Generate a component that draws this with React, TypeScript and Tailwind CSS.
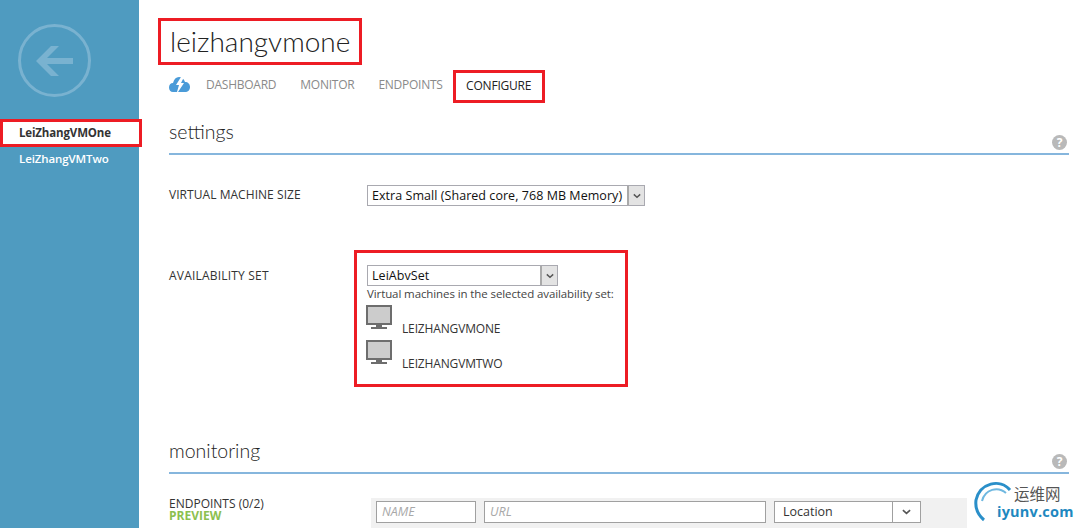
const font = "font-['Open_Sans','Noto_Sans',sans-serif]";

function Chevron({ className }: { className?: string }) {
  return (
    <svg viewBox="0 0 10 6" className={className} fill="none" stroke="currentColor" strokeWidth="1.8">
      <path d="M1 1l4 3.5L9 1" />
    </svg>
  );
}

function Monitor() {
  return (
    <svg width="27" height="25" viewBox="0 0 27 25" className="shrink-0">
      <rect x="1" y="1" width="24" height="18" fill="#cccccc" stroke="#6d6d6d" strokeWidth="2" />
      <rect x="10" y="20" width="6" height="2" fill="#6d6d6d" />
      <rect x="5" y="22" width="16" height="2" fill="#6d6d6d" />
    </svg>
  );
}

function Help() {
  return (
    <div className="w-[15px] h-[15px] -mb-[3px] rounded-full bg-[#b9b9b9] text-white text-[12px] leading-[15px] font-bold text-center">?</div>
  );
}

function SectionHead({ title }: { title: string }) {
  return (
    <div className="flex items-end justify-between h-[42px] border-b-2 border-[#86b6dd] pb-[6px] pr-[2px]">
      <span className="font-['Lato',sans-serif] text-[19.5px] leading-[28px] font-light text-[#222] relative -top-[1px]">{title}</span>
      <Help />
    </div>
  );
}

function NativeSelect({ label, width }: { label: string; width: string }) {
  return (
    <div className={`flex h-[21px] border border-[#a9a9b0] bg-white ${width}`}>
      <span className="flex-1 pl-[4px] text-[12.5px] leading-[19px] text-[#111] whitespace-nowrap overflow-hidden tracking-[0.05px]">{label}</span>
      <span className="w-[17px] bg-[#e3e3e3] border-l-2 border-[#a9a9a9] flex items-center justify-center text-[#555]">
        <Chevron className="w-[8px] h-[6px]" />
      </span>
    </div>
  );
}

export default function App() {
  const tabs = ["DASHBOARD", "MONITOR", "ENDPOINTS"];
  return (
    <div className={`flex h-[528px] w-[1077px] overflow-hidden bg-white relative ${font}`}>
      <aside className="w-[139px] shrink-0 bg-[#4f9bc0] pt-[24px]">
        <div className="ml-[18px] w-[73px] h-[73px] rounded-full border-[3px] border-[#79b2d0] flex items-center justify-center">
          <svg width="38" height="30" viewBox="0 0 38 30" fill="#79b2d0" className="-ml-[2px]">
            <path d="M16 0h8L12 12h26v6H12l12 12h-8L1 15z" />
          </svg>
        </div>
        <div className="mt-[22px] w-[142px] h-[28px] border-[3px] border-[#ed1c24] bg-white pl-[16px] text-[11.5px] leading-[21px] font-bold text-[#333] relative z-10 tracking-[-0.15px]">
          LeiZhangVMOne
        </div>
        <div className="pl-[19px] mt-[2px] text-[11.5px] leading-[20px] font-semibold text-white tracking-[-0.1px]">LeiZhangVMTwo</div>
      </aside>

      <main className="flex-1 pl-[30px] pr-[8px]">
        <div className="pt-[18px] -ml-[11px]">
          <div className="w-[204px] h-[47px] border-[3px] border-[#ed1c24] pl-[9px] font-['Lato',sans-serif] text-[28px] leading-[40px] font-light text-[#222]">
            leizhangvmone
          </div>
        </div>

        <nav className="flex items-center h-[34px] mt-[4px]">
          <svg width="21" height="15" viewBox="0 0 21 15" className="mr-[16px] -mt-[3px]">
            <path fill="#4a9bd8" d="M10 0c3 0 5 2 6 5 3 0 5 2 5 5s-2 5-5 5H4c-2.500 0-4-2-4-4.500S1.500 6 4 6c1-4 3-6 6-6z" />
            <path fill="#fff" d="M12 0L7 8h3l-2 7h1l6-9h-3l3-6z" />
          </svg>
          <div className="flex items-center gap-[24px] text-[12px] text-[#8a8a8a] tracking-[-0.25px] -mt-[2px]">
            {tabs.map((t) => (
              <span key={t}>{t}</span>
            ))}
          </div>
          <span className="ml-[10px] w-[92px] h-[33px] border-[3px] border-[#ed1c24] text-[12px] leading-[26px] text-center text-[#222] tracking-[-0.2px]">
            CONFIGURE
          </span>
        </nav>

        <div className="mt-[10px]">
          <SectionHead title="settings" />
        </div>

        <div className="flex mt-[30px] h-[21px]">
          <span className="w-[198px] text-[12px] leading-[19px] text-[#333] tracking-[0.05px]">VIRTUAL MACHINE SIZE</span>
          <NativeSelect label="Extra Small (Shared core, 768 MB Memory)" width="w-[278px]" />
        </div>

        <div className="flex mt-[44px]">
          <span className="w-[185px] pt-[15px] text-[12px] leading-[21px] text-[#333] tracking-[0.2px]">AVAILABILITY SET</span>
          <div className="w-[274px] h-[137px] border-[3px] border-[#ed1c24] pl-[10px] pt-[12px]">
            <NativeSelect label="LeiAbvSet" width="w-[191px]" />
            <p className="text-[11.5px] leading-[16px] text-[#444] whitespace-nowrap tracking-[-0.1px]">
              Virtual machines in the selected availability set:
            </p>
            <div className="flex mt-[3px] -ml-[1px] h-[35px]">
              <Monitor />
              <span className="ml-[9px] pt-[14px] text-[12px] leading-[20px] text-[#333] tracking-[-0.15px]">LEIZHANGVMONE</span>
            </div>
            <div className="flex -ml-[1px] h-[35px]">
              <Monitor />
              <span className="ml-[9px] pt-[14px] text-[12px] leading-[20px] text-[#333] tracking-[-0.15px]">LEIZHANGVMTWO</span>
            </div>
          </div>
        </div>

        <div className="mt-[45px]">
          <SectionHead title="monitoring" />
        </div>

        <div className="flex mt-[24px]">
          <div className="w-[202px] text-[12px] leading-[12px] tracking-[0px]">
            <div className="text-[#333]">ENDPOINTS (0/2)</div>
            <div className="font-bold text-[#8cc04f]">PREVIEW</div>
          </div>
          <div className="w-[596px] h-[32px] bg-[#f1f1f1] pl-[5px] pt-[3px] flex gap-[8px]">
            <div className="w-[100px] h-[22px] border border-[#a0a0a0] bg-white pl-[5px] text-[12.5px] leading-[20px] italic text-[#a8a8a8]">NAME</div>
            <div className="w-[282px] h-[22px] border border-[#a0a0a0] bg-white pl-[5px] text-[12.5px] leading-[20px] italic text-[#a8a8a8]">URL</div>
            <div className="w-[147px] h-[22px] border border-[#a0a0a0] bg-white flex">
              <span className="flex-1 pl-[8px] text-[12.5px] leading-[20px] text-[#333]">Location</span>
              <span className="w-[28px] border-l border-[#a0a0a0] flex items-center justify-center text-[#555]">
                <Chevron className="w-[9px] h-[6px]" />
              </span>
            </div>
          </div>
        </div>
      </main>

      {/* watermark */}
      <div className="absolute left-[974px] top-[480px] w-[103px] h-[48px] bg-white">
        <svg width="44" height="44" viewBox="0 0 44 44" className="absolute left-0 top-0" fill="none">
          <path d="M36 10C26 -2 6 3 2 20c-1 8 1 14 8 20" stroke="#2a8fc9" strokeWidth="3" />
          <path d="M32 13C24 6 11 9 8 21" stroke="#6fb8e0" strokeWidth="2" />
        </svg>
        <span className="absolute left-[40px] top-[5px] text-[15.500px] leading-[17px] text-[#555] font-['Noto_Sans_CJK_SC',sans-serif]">运维网</span>
        <span className="absolute left-[23px] top-[23px] text-[14.500px] leading-[18px] font-bold text-[#1e88c0] tracking-[0.2px]">iyunv.com</span>
      </div>
    </div>
  );
}
